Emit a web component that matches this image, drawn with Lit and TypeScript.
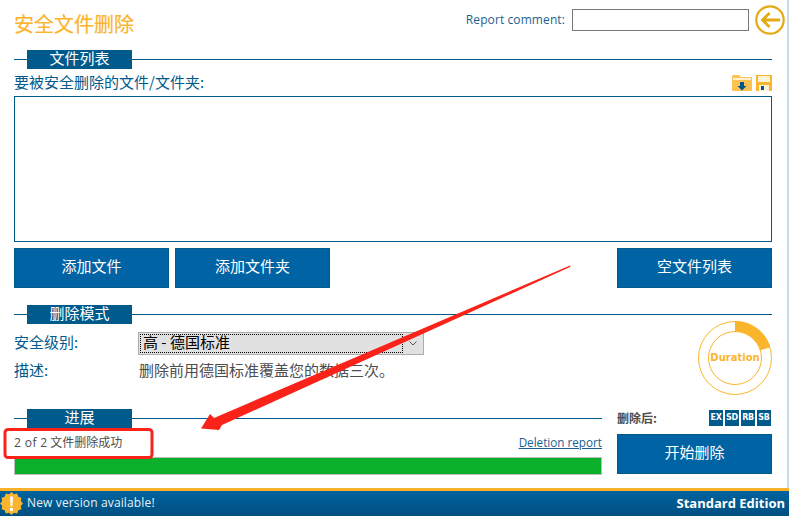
import { LitElement, html, css, svg } from "lit";
import { customElement } from "lit/decorators.js";

const arc = (r1: number, r2: number, deg: number) => {
  const a = (deg * Math.PI) / 180;
  const s = Math.sin(a), c = Math.cos(a);
  const cx = 38, cy = 38;
  return `M${cx} ${cy - r1}A${r1} ${r1} 0 0 1 ${cx + r1 * s} ${cy - r1 * c}L${cx + r2 * s} ${cy - r2 * c}A${r2} ${r2} 0 0 0 ${cx} ${cy - r2}Z`;
};

const starPoints = () => {
  const pts: string[] = [];
  for (let i = 0; i < 24; i++) {
    const r = i % 2 ? 9.6 : 11.4;
    const a = (i * Math.PI) / 12;
    pts.push(`${(11.5 + r * Math.sin(a)).toFixed(1)},${(11.5 - r * Math.cos(a)).toFixed(1)}`);
  }
  return pts.join(" ");
};

@customElement("app-root")
export class AppRoot extends LitElement {
  static styles = css`
    :host {
      display: block;
      position: relative;
      width: 789px;
      height: 516px;
      overflow: hidden;
      background: #fff;
      font-family: "Noto Sans CJK SC", "Liberation Sans", sans-serif;
      font-size: 15px;
      color: #005a8c;
    }
    .page { display: flex; flex-direction: column; height: 516px; }
    .main { flex: 1; padding: 0 15px 0 14px; border-right: 2px solid #c9d9e8; box-sizing: border-box; width: 789px; }
    .top { height: 50px; display: flex; align-items: flex-start; margin-right: -13px; }
    .title { color: #fbb52d; font-size: 20px; font-weight: 400; line-height: 24px; margin: 12px 0 0 0; flex: 1; -webkit-text-stroke: 0.2px #fbb52d; }
    .rc { font: 12px/16px "Open Sans", "Liberation Sans", sans-serif; margin: 12px 7px 0 0; color: #1d5f8f; letter-spacing: 0.1px; }
    .rcin { width: 177px; height: 22px; box-sizing: border-box; border: 1px solid #7a7a7a; margin: 9px 6px 0 0; background: #fff; }
    .back { margin-top: 5px; display: block; }
    .sec { display: flex; align-items: center; height: 19px; }
    .sec i { display: block; height: 1px; background: #005a8c; }
    .sec i:first-child { width: 13px; }
    .sec i:last-child { flex: 1; }
    .sec b { width: 105px; height: 19px; background: #005a8c; color: #fff; font-weight: 400; font-size: 15px; line-height: 16px; text-align: center; }
    .listhead { height: 27px; display: flex; justify-content: space-between; align-items: flex-start; }
    .listhead span { line-height: 18px; margin-top: 4px; }
    .icons { display: flex; gap: 4px; margin-top: 6px; margin-left: -4px; }
    .icons svg { display: block; }
    .list { height: 146px; border: 1px solid #005a8c; box-sizing: border-box; }
    .btns { display: flex; gap: 6px; margin-top: 6px; height: 40px; }
    .btn { width: 155px; height: 40px; box-sizing: border-box; background: #0063a3; border: 1px solid #005a8c; color: #fff; display: flex; align-items: center; justify-content: center; font-size: 15px; padding-bottom: 6px; }
    .btns .spacer { flex: 1; }
    .s2 { margin-top: 17px; }
    .grid { display: grid; grid-template-columns: 124px 286px 1fr; }
    .lbl { line-height: 20px; }
    .sel { height: 23px; box-sizing: border-box; background: #e1e1e1; border: 1px solid #adadad; display: flex; align-items: center; padding: 1px; margin-top: 8px; }
    .sel span { flex: 1; border: 1px dotted #000; box-sizing: border-box; height: 19px; color: #000; line-height: 14px; padding-left: 2px; font-size: 15px; }
    .sel svg { margin: 0 5px 0 6px; }
    .l1 { margin-top: 8px; }
    .l2 { margin-top: 5px; line-height: 20px; }
    .desc { color: #4d4d4d; padding-left: 1px; }
    .s2wrap { display: grid; grid-template-columns: 1fr 75px; height: 85px; }
    .ring { margin-top: -4px; position: relative; height: 76px; }
    .ring svg { display: block; }
    .ring span { position: absolute; left: 0; width: 76px; top: 31px; text-align: center; font: bold 10px/14px "DejaVu Sans", sans-serif; color: #fbb52d; }
    .s3 { display: grid; grid-template-columns: 588px 15px 155px; height: 70px; }
    .prog { display: flex; flex-direction: column; }
    .info { display: flex; justify-content: space-between; align-items: center; height: 28px; font-size: 12px; color: #4d4d4d; }
    .info a { color: #1d5f8f; text-decoration: underline; font: 11.700px/16px "Open Sans", "Liberation Sans", sans-serif; }
    .info em { font-style: normal; font-family: "Open Sans", "Liberation Sans", sans-serif; letter-spacing: 0.4px; }
    .bar { height: 18px; box-sizing: border-box; background: #0ab02a; border: 1px solid #bcbcbc; margin-top: 1px; }
    .after { height: 25px; display: flex; align-items: flex-start; justify-content: space-between; font-size: 12px; font-weight: 700; color: #4d4d4d; line-height: 18px; box-sizing: border-box; }
    .badges { display: flex; padding-top: 1px; }
    .badges span { width: 14px; height: 16px; margin: 0 1px; background: #005a8c; color: #fff; font: bold 8px/16px "DejaVu Sans", sans-serif; text-align: center; letter-spacing: -0.3px; }
    .start { height: 40px; width: 155px; box-sizing: border-box; background: #0063a3; border: 1px solid #005a8c; color: #fff; font-size: 15px; display: flex; align-items: center; justify-content: center; padding-bottom: 5px; }
    .foot { height: 28px; box-sizing: border-box; border-top: 3px solid #fbb02a; background: linear-gradient(#00639e, #004f80); color: #fff; display: flex; align-items: center; justify-content: space-between; padding: 0 4px 2px 0; }
    .foot .l { display: flex; align-items: center; gap: 4px; font: 12px/16px "Open Sans", "Liberation Sans", sans-serif; color: #e8f1f7; letter-spacing: 0.14px; }
    .foot .l svg { margin-top: 2px; }
    .foot .r { font: bold 13px/16px "Open Sans", sans-serif; }
    .mark { position: absolute; inset: 0; width: 789px; height: 516px; pointer-events: none; }
  `;

  private sec(t: string) {
    return html`<div class="sec"><i></i><b>${t}</b><i></i></div>`;
  }

  render() {
    return html`
      <div class="page">
        <div class="main">
          <div class="top">
            <div class="title">安全文件删除</div>
            <div class="rc">Report comment:</div>
            <div class="rcin"></div>
            <svg class="back" width="30" height="30" viewBox="0 0 30 30">
              <circle cx="15" cy="15" r="13.7" fill="none" stroke="#e4aa12" stroke-width="2.2" />
              <path d="M14.500 8 7.500 15l7 7M8 15h17" fill="none" stroke="#e4aa12" stroke-width="2.800" />
            </svg>
          </div>
          ${this.sec("文件列表")}
          <div class="listhead">
            <span>要被安全删除的文件/文件夹:</span>
            <div class="icons">
              <svg width="20" height="16" viewBox="0 0 20 16">
                <path d="M0 2 1 0h6l2 2h11v14H0z" fill="#fcc254" />
                <path d="M1 3h18v2H1z" fill="#fff0cf" />
                <path d="M8 7h4v4h2.500L10 15.500 5.500 11H8z" fill="#00558a" />
              </svg>
              <svg width="16" height="16" viewBox="0 0 16 16">
                <path d="M0 0h16v16H0z" fill="#fbb52d" />
                <path d="M2 1h12v6H2z" fill="#fff3d8" />
                <path d="M3 10h10v6H3z" fill="#fff3d8" />
                <path d="M5 11h3v4H5z" fill="#00558a" />
              </svg>
            </div>
          </div>
          <div class="list"></div>
          <div class="btns">
            <div class="btn">添加文件</div>
            <div class="btn">添加文件夹</div>
            <div class="spacer"></div>
            <div class="btn">空文件列表</div>
          </div>
          <div class="s2">${this.sec("删除模式")}</div>
          <div class="s2wrap">
            <div>
              <div class="grid">
                <div class="lbl l1">安全级别:</div>
                <div class="sel">
                  <span>高 - 德国标准</span>
                  <svg width="8" height="5" viewBox="0 0 8 5"><path d="M.5.500 4 4 7.500.500" fill="none" stroke="#555" /></svg>
                </div>
                <div></div>
                <div class="l2">描述:</div>
                <div class="l2 desc" style="grid-column: span 2">删除前用德国标准覆盖您的数据三次。</div>
              </div>
            </div>
            <div class="ring">
              <svg width="76" height="76" viewBox="0 0 76 76">
                <circle cx="38" cy="38" r="36.500" fill="none" stroke="#fbb52d" />
                <circle cx="38" cy="38" r="26.500" fill="none" stroke="#fbb52d" />
                ${svg`<path d=${arc(37, 26.5, 73)} fill="#fbb52d" />`}
              </svg>
              <span>Duration</span>
            </div>
          </div>
          <div class="s3">
            <div class="prog">
              ${this.sec("进展")}
              <div class="info"><span><em>2 of 2</em> 文件删除成功</span><a>Deletion report</a></div>
              <div class="bar"></div>
            </div>
            <div></div>
            <div>
              <div class="after">
                <span>删除后:</span>
                <div class="badges"><span>EX</span><span>SD</span><span>RB</span><span>SB</span></div>
              </div>
              <div class="start">开始删除</div>
            </div>
          </div>
        </div>
        <div class="foot">
          <div class="l">
            <svg width="23" height="23" viewBox="0 0 23 23">
              <polygon points=${starPoints()} fill="#fbb52d" />
              <path d="M10 4.500h3l-.6 10h-1.800zM10 16h3v3h-3z" fill="#fff" />
            </svg>
            <span>New version available!</span>
          </div>
          <div class="r">Standard Edition</div>
        </div>
      </div>
      <svg class="mark" viewBox="0 0 789 516">
        <rect x="5" y="429.500" width="147" height="28" rx="3" fill="none" stroke="#f9231a" stroke-width="3" />
        <polygon points="570,265.500 570.500,266.800 222,425 219,430 201,428.500 210,414 214,418" fill="#f9231a" />
      </svg>
    `;
  }
}
